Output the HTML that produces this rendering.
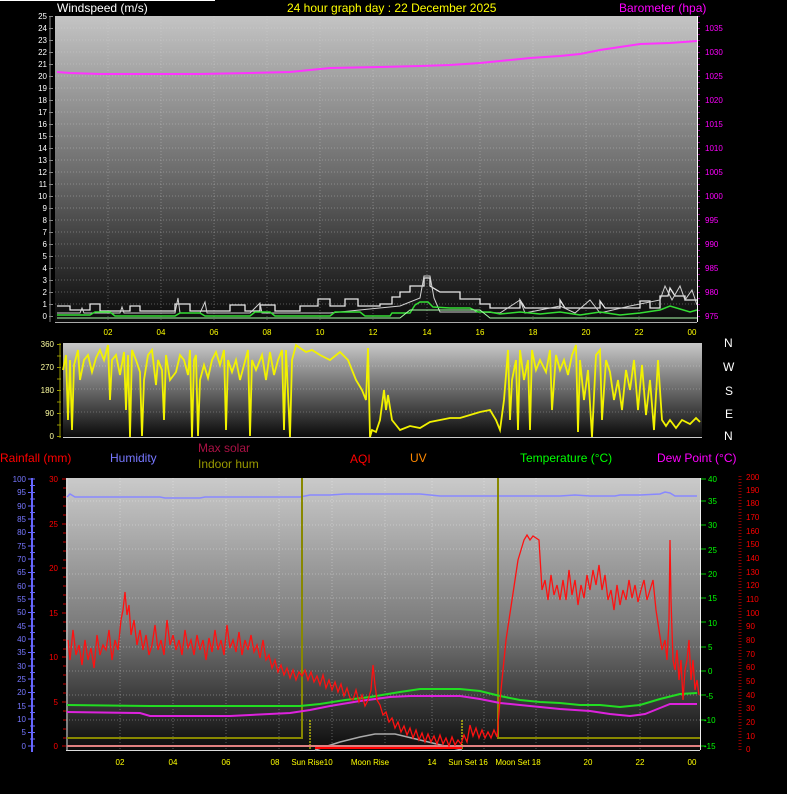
<!DOCTYPE html>
<html><head><meta charset="utf-8"><style>
html,body{margin:0;padding:0;background:#000;width:787px;height:794px;overflow:hidden}
svg{display:block}
text{font-family:"Liberation Sans",sans-serif}
</style></head><body>
<svg width="787" height="794" viewBox="0 0 787 794" xmlns="http://www.w3.org/2000/svg">
<defs>
<linearGradient id="g1" x1="0" y1="0" x2="0" y2="1">
<stop offset="0" stop-color="#c4c4c4"/><stop offset="0.5" stop-color="#6e6e6e"/><stop offset="1" stop-color="#0a0a0a"/></linearGradient>
<linearGradient id="g2" x1="0" y1="0" x2="0" y2="1">
<stop offset="0" stop-color="#c8c8c8"/><stop offset="1" stop-color="#080808"/></linearGradient>
<linearGradient id="g3" x1="0" y1="0" x2="0" y2="1">
<stop offset="0" stop-color="#cacaca"/><stop offset="0.55" stop-color="#7a7a7a"/><stop offset="1" stop-color="#0c0c0c"/></linearGradient>
</defs>
<rect width="787" height="794" fill="#000"/>
<line x1="0" y1="0.5" x2="215" y2="0.5" stroke="#fff"/>
<!-- TOP CHART -->
<text x="57" y="12" fill="#fff" font-size="12">Windspeed (m/s)</text>
<text x="287" y="12" fill="#ffff00" font-size="12">24 hour graph day : 22 December 2025</text>
<text x="619" y="12" fill="#ff00ff" font-size="12">Barometer (hpa)</text>
<rect x="55" y="16" width="642" height="306" fill="url(#g1)"/>
<g stroke="#d8d8d8" stroke-opacity="0.35" stroke-dasharray="1,2">
<path d="M55 28H697M55 40H697M55 52H697M55 64H697M55 76H697M55 88H697M55 100H697M55 112H697M55 124H697M55 136H697M55 148H697M55 160H697M55 172H697M55 184H697M55 196H697M55 208H697M55 220H697M55 232H697M55 244H697M55 256H697M55 268H697M55 280H697M55 292H697M55 304H697"/>
<path d="M108 16V322M161 16V322M214 16V322M267 16V322M320 16V322M373 16V322M427 16V322M480 16V322M533 16V322M586 16V322M639 16V322"/>
</g>
<line x1="697.5" y1="16" x2="697.5" y2="322" stroke="#fff"/>
<line x1="55" y1="322.5" x2="697" y2="322.5" stroke="#aaa"/>
<g fill="#fff" font-size="8" text-anchor="end">
<text x="47" y="19">25</text><text x="47" y="31">24</text><text x="47" y="43">23</text><text x="47" y="55">22</text><text x="47" y="67">21</text><text x="47" y="79">20</text><text x="47" y="91">19</text><text x="47" y="103">18</text><text x="47" y="115">17</text><text x="47" y="127">16</text><text x="47" y="139">15</text><text x="47" y="151">14</text><text x="47" y="163">13</text><text x="47" y="175">12</text><text x="47" y="187">11</text><text x="47" y="199">10</text><text x="47" y="211">9</text><text x="47" y="223">8</text><text x="47" y="235">7</text><text x="47" y="247">6</text><text x="47" y="259">5</text><text x="47" y="271">4</text><text x="47" y="283">3</text><text x="47" y="295">2</text><text x="47" y="307">1</text><text x="47" y="319">0</text>
</g>
<g stroke="#888"><path d="M50 16V322M49 16.5H53M49 28.5H53M49 40.5H53M49 52.5H53M49 64.5H53M49 76.5H53M49 88.5H53M49 100.5H53M49 112.5H53M49 124.5H53M49 136.5H53M49 148.5H53M49 160.5H53M49 172.5H53M49 184.5H53M49 196.5H53M49 208.5H53M49 220.5H53M49 232.5H53M49 244.5H53M49 256.5H53M49 268.5H53M49 280.5H53M49 292.5H53M49 304.5H53M49 316.5H53"/></g>
<g fill="#ff00ff" font-size="8">
<text x="705" y="31">1035</text><text x="705" y="55">1030</text><text x="705" y="79">1025</text><text x="705" y="103">1020</text><text x="705" y="127">1015</text><text x="705" y="151">1010</text><text x="705" y="175">1005</text><text x="705" y="199">1000</text><text x="705" y="223">995</text><text x="705" y="247">990</text><text x="705" y="271">985</text><text x="705" y="295">980</text><text x="705" y="319">975</text>
</g>
<path d="M699 16V322" stroke="#ff00ff" stroke-dasharray="1,5"/>
<polyline fill="none" stroke="#ff33ff" stroke-width="2" points="57,72 70,73 100,74 150,74 200,74 250,73 290,72 310,70 330,68 380,67 420,66 450,65 480,63 500,61 530,58 560,56 580,54 600,50 620,47 640,44 670,43 697,41"/>
<polyline fill="none" stroke="#e8e8e8" stroke-width="1.3" points="57,306 70,306 70,310 90,310 90,304 100,304 100,311 130,311 130,306 140,306 140,311 175,311 175,304 190,304 190,311 230,311 230,305 245,305 245,311 260,311 260,305 275,305 275,311 300,311 300,306 318,306 318,299 330,299 330,306 345,306 345,299 358,299 358,306 380,306 380,304 392,304 392,297 400,297 400,292 410,292 410,286 424,286 424,278 430,278 430,286 440,292 460,292 460,299 480,299 480,304 490,304 490,308 520,308 520,300 525,308 560,308 560,300 565,308 600,308 600,301 605,308 640,308 640,301 650,301 650,308 660,308 660,296 668,296 670,288 675,296 685,296 685,300 697,300"/>
<polyline fill="none" stroke="#d0d0d0" stroke-width="1" points="57,313 80,313 82,308 84,313 120,313 122,307 124,313 175,313 178,298 180,313 200,313 205,302 207,313 250,313 260,303 262,313 300,313 330,313 400,306 420,298 424,276 430,276 434,298 440,312 480,312 500,313 520,300 525,313 560,306 575,313 590,300 600,313 630,306 660,300 665,286 672,300 680,286 685,300 692,290 697,305"/>
<polyline fill="none" stroke="#33dd33" stroke-width="1.5" points="57,315 90,315 95,312 110,312 115,316 175,316 180,313 200,313 205,316 250,316 255,312 270,312 275,316 330,316 335,312 360,312 365,316 390,316 392,313 410,313 415,305 420,302 428,302 433,307 450,308 470,308 478,312 490,312 500,314 520,312 540,314 560,312 580,315 600,312 620,315 640,313 660,310 670,306 680,309 690,312 697,310"/>
<polyline fill="none" stroke="#aaffaa" stroke-width="1" points="57,318 400,318 410,310 480,310 490,318 697,318"/>
<g fill="#ffff00" font-size="8" text-anchor="middle">
<text x="108" y="335">02</text><text x="161" y="335">04</text><text x="214" y="335">06</text><text x="267" y="335">08</text><text x="320" y="335">10</text><text x="373" y="335">12</text><text x="427" y="335">14</text><text x="480" y="335">16</text><text x="533" y="335">18</text><text x="586" y="335">20</text><text x="639" y="335">22</text><text x="692" y="335">00</text>
</g>
<!-- WIND DIR -->
<rect x="63" y="343" width="639" height="95" fill="url(#g2)"/>
<g stroke="#fff" stroke-opacity="0.25" stroke-dasharray="1,2"><path d="M63 366H702M63 389H702M63 412H702"/></g>
<line x1="63" y1="437.5" x2="702" y2="437.5" stroke="#ccc"/>
<g fill="#ffffa0" font-size="8" text-anchor="end">
<text x="54" y="347">360</text><text x="54" y="370">270</text><text x="54" y="393">180</text><text x="54" y="416">90</text><text x="54" y="439">0</text></g>
<path d="M60 343V438M57 344.5H61M57 356H61M57 367.5H61M57 379H61M57 390.5H61M57 402H61M57 413.5H61M57 425H61M57 436.5H61" stroke="#999900"/>
<polyline fill="none" stroke="#f2f200" stroke-width="1.8" points="63,370 66,355 68,420 70,360 72,430 74,365 78,350 80,380 84,360 88,355 92,372 96,358 100,350 104,360 108,345 110,400 112,360 116,355 120,375 124,352 126,410 128,355 130,437 132,350 136,360 140,372 142,436 144,380 148,355 152,350 156,385 158,360 162,370 164,420 166,355 170,380 176,372 180,355 184,360 188,375 190,350 192,437 194,360 196,355 198,436 200,380 204,365 208,378 212,360 216,352 220,365 224,350 226,430 228,360 232,372 236,360 240,380 244,365 248,350 250,436 252,360 256,370 262,355 266,380 270,352 274,375 278,360 282,350 284,430 286,350 290,437 292,360 296,345 300,348 306,352 312,350 320,355 330,360 340,352 348,360 356,380 362,390 366,400 368,348 370,437 372,430 376,432 380,420 384,390 386,410 388,395 392,420 396,425 400,430 410,426 420,428 430,422 440,420 450,418 460,418 470,415 480,412 490,410 496,420 500,430 504,400 508,350 510,420 512,380 516,360 518,430 520,350 524,380 528,360 530,430 532,350 536,370 540,360 546,372 550,350 552,410 556,355 560,370 564,360 568,375 572,355 576,345 578,432 580,360 584,400 588,370 592,437 596,355 600,350 602,420 606,360 610,372 614,400 618,380 622,410 626,370 630,390 634,360 638,410 642,365 646,415 650,380 654,430 658,360 662,420 666,426 670,420 676,428 682,420 690,424 696,418 700,422"/>
<g fill="#fff" font-size="12"><text x="724" y="347">N</text><text x="723" y="371">W</text><text x="725" y="395">S</text><text x="725" y="418">E</text><text x="724" y="440">N</text></g>
<!-- LEGEND -->
<g font-size="12">
<text x="0" y="462" fill="#ff0000">Rainfall (mm)</text>
<text x="110" y="462" fill="#7777ff">Humidity</text>
<text x="198" y="452" fill="#aa1144">Max solar</text>
<text x="198" y="468" fill="#999900">Indoor hum</text>
<text x="350" y="463" fill="#ff0000">AQI</text>
<text x="410" y="462" fill="#ff8800">UV</text>
<text x="520" y="462" fill="#00ff00">Temperature (°C)</text>
<text x="657" y="462" fill="#ff00ff">Dew Point (°C)</text>
</g>
<!-- BOTTOM CHART -->
<rect x="66" y="478" width="634" height="272" fill="url(#g3)"/>
<g stroke="#fff" stroke-opacity="0.3" stroke-dasharray="1,2">
<path d="M66 501H700M66 525H700M66 549H700M66 574H700M66 598H700M66 622H700M66 647H700M66 671H700M66 695H700M66 720H700"/>
<path d="M120 478V750M173 478V750M226 478V750M279 478V750M332 478V750M385 478V750M432 478V750M484 478V750M536 478V750M588 478V750M640 478V750"/>
</g>
<line x1="700.5" y1="478" x2="700.5" y2="750" stroke="#eee"/>
<line x1="66" y1="750.5" x2="700" y2="750.5" stroke="#ddd"/>
<line x1="67" y1="478" x2="67" y2="750" stroke="#ddd"/>
<path d="M32 478V752" stroke="#6666ff" stroke-width="2"/>
<g fill="#7777ff" font-size="8" text-anchor="end">
<text x="26" y="482">100</text><text x="26" y="495">95</text><text x="26" y="509">90</text><text x="26" y="522">85</text><text x="26" y="535">80</text><text x="26" y="549">75</text><text x="26" y="562">70</text><text x="26" y="575">65</text><text x="26" y="589">60</text><text x="26" y="602">55</text><text x="26" y="615">50</text><text x="26" y="629">45</text><text x="26" y="642">40</text><text x="26" y="655">35</text><text x="26" y="669">30</text><text x="26" y="682">25</text><text x="26" y="695">20</text><text x="26" y="709">15</text><text x="26" y="722">10</text><text x="26" y="735">5</text><text x="26" y="749">0</text>
</g>
<path d="M28 479H35M30 485.5H35M28 492.5H35M30 499H35M28 506H35M30 512.5H35M28 519H35M30 526H35M28 532.5H35M30 539H35M28 546H35M30 552.5H35M28 559H35M30 566H35M28 572.5H35M30 579H35M28 586H35M30 592.5H35M28 599H35M30 606H35M28 612.5H35M30 619H35M28 626H35M30 632.5H35M28 639H35M30 646H35M28 652.5H35M30 659H35M28 666H35M30 672.5H35M28 679H35M30 686H35M28 692.5H35M30 699H35M28 706H35M30 712.5H35M28 719H35M30 726H35M28 732.5H35M30 739H35M28 746H35" stroke="#6666ff"/>
<g fill="#ff0000" font-size="8" text-anchor="end">
<text x="58" y="482">30</text><text x="58" y="527">25</text><text x="58" y="571">20</text><text x="58" y="616">15</text><text x="58" y="660">10</text><text x="58" y="705">5</text><text x="58" y="749">0</text></g>
<path d="M62 479H66M63 488H66M63 497H66M63 506H66M63 515H66M62 524H66M63 533H66M63 542H66M63 551H66M63 560H66M62 568H66M63 577H66M63 586H66M63 595H66M63 604H66M62 613H66M63 622H66M63 631H66M63 640H66M63 649H66M62 657H66M63 666H66M63 675H66M63 684H66M63 693H66M62 702H66M63 711H66M63 720H66M63 729H66M63 738H66M62 746H66" stroke="#cc0000"/>
<g fill="#00ff00" font-size="8">
<text x="708" y="482">40</text><text x="708" y="504">35</text><text x="708" y="528">30</text><text x="708" y="553">25</text><text x="708" y="577">20</text><text x="708" y="601">15</text><text x="708" y="626">10</text><text x="708" y="650">5</text><text x="708" y="674">0</text><text x="706" y="699">-5</text><text x="704" y="723">-10</text><text x="704" y="749">-15</text></g>
<path d="M701 479H706M701 501H706M701 525H706M701 549H706M701 574H706M701 598H706M701 622H706M701 647H706M701 671H706M701 695H706M701 720H706M701 746H706" stroke="#00cc00"/>
<path d="M740 476V752" stroke="#880000" stroke-width="3" stroke-dasharray="1,2"/>
<g fill="#ff0000" font-size="8">
<text x="746" y="480">200</text><text x="746" y="493">190</text><text x="746" y="506">180</text><text x="746" y="520">170</text><text x="746" y="534">160</text><text x="746" y="547">150</text><text x="746" y="561">140</text><text x="746" y="575">130</text><text x="746" y="588">120</text><text x="746" y="602">110</text><text x="746" y="616">100</text><text x="746" y="629">90</text><text x="746" y="643">80</text><text x="746" y="657">70</text><text x="746" y="670">60</text><text x="746" y="684">50</text><text x="746" y="698">40</text><text x="746" y="711">30</text><text x="746" y="725">20</text><text x="746" y="739">10</text><text x="746" y="752">0</text></g>
<polyline fill="none" stroke="#8888ff" stroke-width="1.5" points="67,497 70,494 75,497 160,497 165,498 200,498 205,497 300,497 310,495 330,495 345,494 420,494 440,496 500,496 560,496 575,495 590,496 615,496 620,495 640,495 660,494 665,492 670,493 675,496 697,496"/>
<path d="M67 738H302V478M498 478V738H700" fill="none" stroke="#888800" stroke-width="2"/>
<path d="M310 720V750M462 720V750" stroke="#ffff00" stroke-dasharray="2,1"/>
<polyline fill="none" stroke="#aaaaaa" stroke-width="1.5" points="315,750 340,742 360,737 375,734 395,734 420,740 445,746 462,750"/>
<line x1="67" y1="746" x2="700" y2="746" stroke="#e08080" stroke-width="2"/>
<line x1="315" y1="748" x2="462" y2="748" stroke="#ff0000" stroke-width="2"/>
<polyline fill="none" stroke="#22dd22" stroke-width="2" points="67,705 150,706 260,706 300,706 320,704 345,700 370,697 400,692 420,689 460,689 480,691 500,696 520,700 540,702 560,703 580,705 600,705 620,707 640,705 660,699 680,694 697,693"/>
<polyline fill="none" stroke="#dd22dd" stroke-width="2" points="67,712 140,713 150,716 230,716 250,715 290,713 310,710 330,706 360,701 390,697 410,696 460,696 480,699 500,703 520,705 540,707 560,709 590,711 610,714 630,716 645,714 660,708 670,704 697,704"/>
<polyline fill="none" stroke="#ff1111" stroke-width="1.3" points="68,640 70,660 73,630 76,655 79,645 82,665 85,640 88,660 91,648 94,668 97,635 100,655 103,645 106,650 109,630 112,660 115,640 118,650 121,620 123,610 125,592 127,615 129,605 131,635 134,620 137,645 140,630 143,650 146,635 149,655 152,645 155,625 158,650 161,640 164,655 167,620 170,645 173,635 176,650 179,640 182,655 185,630 188,648 191,640 194,655 197,635 200,650 203,640 206,660 209,638 212,652 215,630 218,650 221,640 224,655 227,625 230,648 233,640 236,652 239,632 242,655 245,640 248,650 251,635 254,652 257,645 260,658 263,640 266,660 269,655 272,668 275,660 278,672 281,665 284,675 287,668 290,678 293,670 296,680 299,672 302,676 305,670 308,680 311,672 314,682 317,676 320,685 323,675 326,688 329,680 332,690 335,682 338,692 341,684 344,696 347,688 350,698 353,700 356,690 359,702 362,695 365,706 368,700 371,690 373,665 375,685 377,700 380,705 383,715 386,712 389,722 392,718 395,728 398,722 401,732 404,726 407,735 410,728 413,738 416,730 419,740 422,733 425,742 428,734 431,742 434,736 437,744 440,735 443,744 446,738 449,746 452,737 455,745 458,740 461,744 464,735 467,742 470,725 473,736 476,728 479,738 482,730 485,738 488,732 491,738 494,730 497,737 500,700 503,670 506,640 509,620 512,600 515,580 518,560 521,550 524,540 527,535 530,540 533,536 536,538 539,540 542,590 545,580 548,600 551,575 554,595 557,585 560,600 563,580 566,600 569,570 572,595 575,580 578,605 581,585 584,598 587,575 590,590 593,570 596,585 599,565 602,590 605,575 608,600 611,590 614,610 617,585 620,605 623,590 626,600 629,580 632,598 635,585 638,602 641,590 644,580 647,600 650,590 653,580 656,610 659,630 662,650 665,640 667,660 669,620 670,540 671,600 673,660 675,670 677,650 679,680 681,660 683,700 685,670 687,660 689,640 691,680 693,660 695,690 697,680 699,695"/>
<g fill="#ffff00" font-size="8" text-anchor="middle">
<text x="120" y="765">02</text><text x="173" y="765">04</text><text x="226" y="765">06</text><text x="275" y="765">08</text>
<text x="312" y="765">Sun Rise10</text><text x="370" y="765">Moon Rise</text><text x="432" y="765">14</text><text x="468" y="765">Sun Set  16</text><text x="518" y="765">Moon Set 18</text><text x="588" y="765">20</text><text x="640" y="765">22</text><text x="692" y="765">00</text>
</g>
</svg>
</body></html>
